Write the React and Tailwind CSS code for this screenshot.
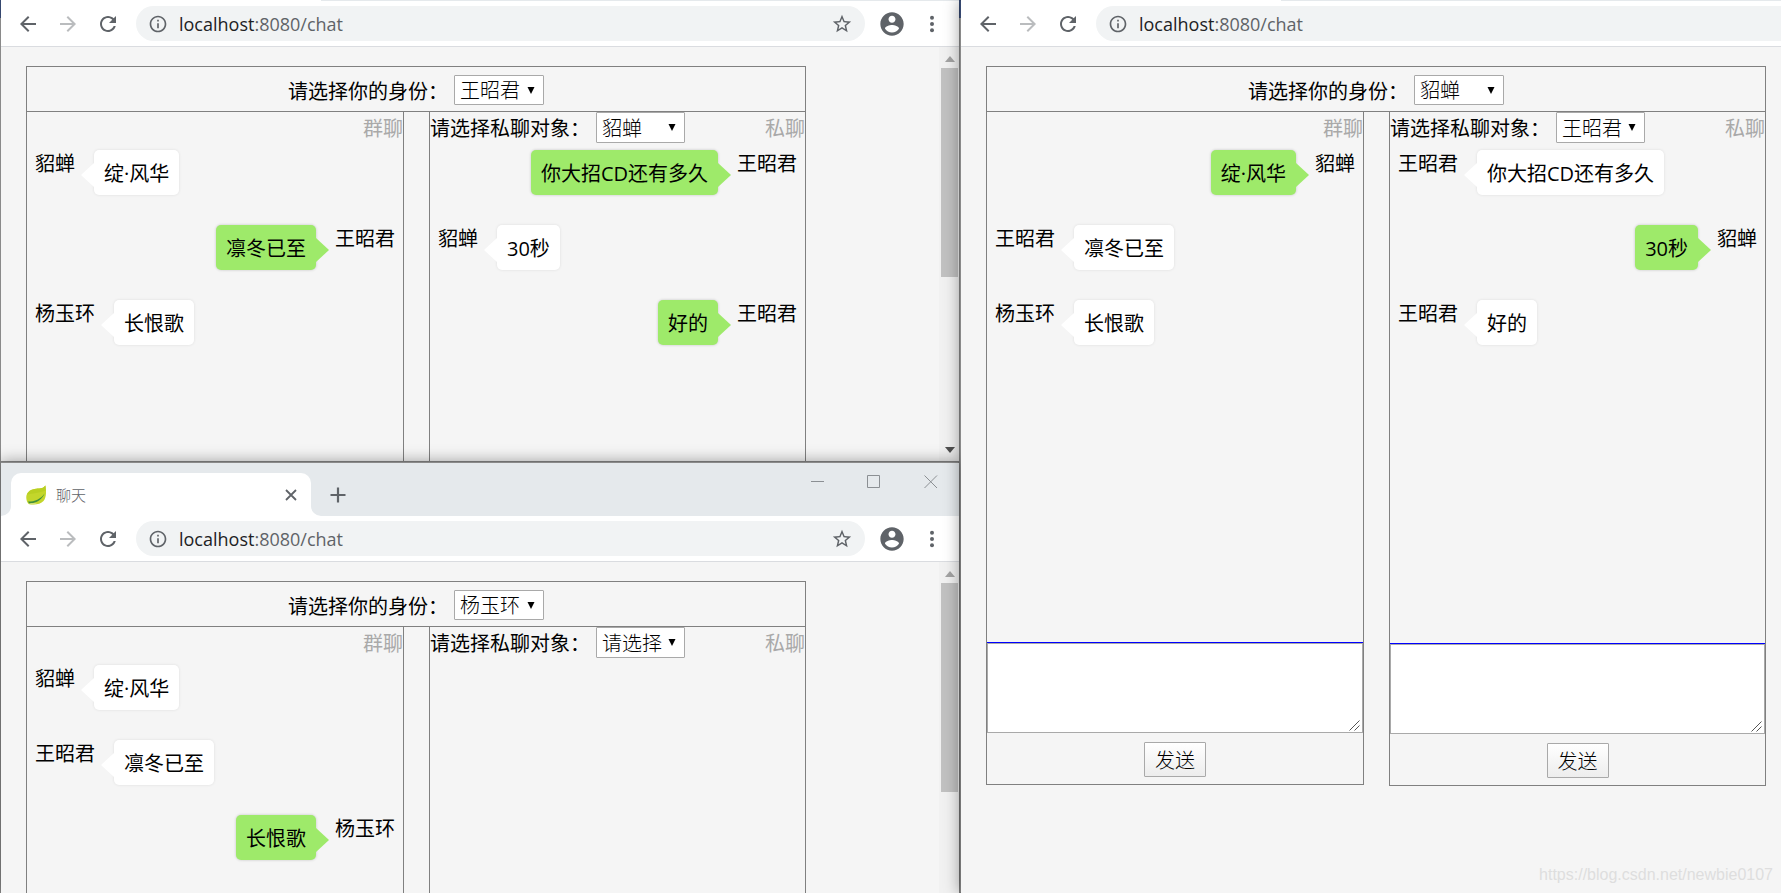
import React from "react";

const cx = (...parts) => parts.filter(Boolean).join(" ");

/* ---------- browser icons ---------- */

function IconBack({ className }) {
  return (
    <svg viewBox="0 0 24 24" className={cx("size-6", className)} fill="currentColor" aria-hidden="true">
      <path d="M20 11H7.83l5.59-5.59L12 4l-8 8 8 8 1.41-1.41L7.83 13H20v-2z" />
    </svg>
  );
}

function IconForward({ className }) {
  return (
    <svg viewBox="0 0 24 24" className={cx("size-6", className)} fill="currentColor" aria-hidden="true">
      <path d="M12 4l-1.41 1.41L16.17 11H4v2h12.17l-5.58 5.59L12 20l8-8z" />
    </svg>
  );
}

function IconReload() {
  return (
    <svg viewBox="0 0 24 24" className="size-6" fill="currentColor" aria-hidden="true">
      <path d="M17.65 6.35C16.2 4.9 14.21 4 12 4c-4.42 0-7.99 3.58-7.99 8s3.57 8 7.99 8c3.73 0 6.84-2.55 7.73-6h-2.08c-.82 2.33-3.04 4-5.65 4-3.31 0-6-2.69-6-6s2.69-6 6-6c1.66 0 3.14.69 4.22 1.78L13 11h7V4l-2.35 2.35z" />
    </svg>
  );
}

function IconInfo() {
  return (
    <svg viewBox="0 0 24 24" className="size-5" fill="currentColor" aria-hidden="true">
      <path d="M11 17h2v-6h-2v6zm1-15C6.48 2 2 6.48 2 12s4.48 10 10 10 10-4.48 10-10S17.52 2 12 2zm0 18c-4.41 0-8-3.59-8-8s3.59-8 8-8 8 3.59 8 8-3.59 8-8 8zM11 9h2V7h-2v2z" />
    </svg>
  );
}

function IconStar() {
  return (
    <svg viewBox="0 0 24 24" className="size-[22px]" fill="currentColor" aria-hidden="true">
      <path d="M22 9.24l-7.19-.62L12 2 9.19 8.63 2 9.24l5.46 4.73L5.82 21 12 17.27 18.18 21l-1.63-7.03L22 9.24zM12 15.4l-3.76 2.27 1-4.28-3.32-2.88 4.38-.38L12 6.1l1.71 4.04 4.38.38-3.32 2.88 1 4.28L12 15.4z" />
    </svg>
  );
}

function IconAccount() {
  return (
    <svg viewBox="0 0 24 24" className="size-7" fill="currentColor" aria-hidden="true">
      <path d="M12 2C6.48 2 2 6.48 2 12s4.48 10 10 10 10-4.48 10-10S17.52 2 12 2zm0 3c1.66 0 3 1.34 3 3s-1.34 3-3 3-3-1.34-3-3 1.34-3 3-3zm0 14.2c-2.5 0-4.71-1.28-6-3.22.03-1.99 4-3.08 6-3.08 1.99 0 5.97 1.09 6 3.08-1.29 1.94-3.5 3.22-6 3.22z" />
    </svg>
  );
}

function IconMenu() {
  return (
    <svg viewBox="0 0 24 24" className="size-6" fill="currentColor" aria-hidden="true">
      <circle cx="12" cy="5.8" r="2" />
      <circle cx="12" cy="12" r="2" />
      <circle cx="12" cy="18.2" r="2" />
    </svg>
  );
}

function LeafIcon() {
  return (
    <svg viewBox="0 0 20 20" className="size-5" aria-hidden="true">
      <path d="M19.4 0.6C17 4 13 3.4 8.5 4C3 4.8 0 8.5 0.3 13C0.4 15.5 1.3 17.5 2.6 19C8 20.2 14.5 19.5 17.5 16C20.5 12.5 20.4 6 19.4 0.6Z" fill="#c3d62b" />
      <path d="M19.4 0.6C17 4 13 3.4 8.5 4C4.5 4.6 2 6.7 1 9.5C6 8.5 14 8 19.8 5.5Z" fill="#b9cf22" />
      <path d="M2 16.6C8 16.8 14.5 14.5 18.6 8.5C16.5 14 10.5 18.6 3.2 18.4Z" fill="#3f8f3c" />
      <path d="M2.6 19C4 17.8 8 18.2 11 18.6C8.5 19.7 5 19.6 2.6 19Z" fill="#dbe68a" />
    </svg>
  );
}

/* ---------- browser chrome ---------- */

function IconButton({ label, className, children }) {
  return (
    <button type="button" aria-label={label} className={cx("flex size-6 shrink-0 items-center justify-center", className)}>
      {children}
    </button>
  );
}

function TabStrip() {
  return (
    <div className="flex h-[53px] shrink-0 bg-[#e5e9ec]">
      <div className="mt-[10px] flex w-[320px] items-end">
        <svg viewBox="0 0 10 10" className="size-[10px] shrink-0 text-white" fill="currentColor" aria-hidden="true">
          <path d="M10 0V10H0A10 10 0 0 0 10 0Z" />
        </svg>
        <div className="flex h-full flex-1 items-center rounded-t-[10px] bg-white pl-[15px] pr-[14px]">
          <LeafIcon />
          <span className="ml-[10px] flex-1 text-[15px] font-light leading-5 text-[#5f6368]">聊天</span>
          <button type="button" aria-label="关闭标签页" className="text-[#5f6368]">
            <svg viewBox="0 0 12 12" className="size-3" stroke="currentColor" strokeWidth="1.8" aria-hidden="true">
              <path d="M1 1L11 11M11 1L1 11" />
            </svg>
          </button>
        </div>
        <svg viewBox="0 0 10 10" className="size-[10px] shrink-0 text-white" fill="currentColor" aria-hidden="true">
          <path d="M0 0V10H10A10 10 0 0 1 0 0Z" />
        </svg>
      </div>
      <button type="button" aria-label="新标签页" className="ml-[9px] mt-[10px] flex items-center text-[#5f6368]">
        <svg viewBox="0 0 16 16" className="size-4" stroke="currentColor" strokeWidth="2.2" aria-hidden="true">
          <path d="M8 0.5V15.5M0.5 8H15.5" />
        </svg>
      </button>
      <div className="ml-auto mr-[21px] flex h-[38px] items-center gap-[43px] text-[#8b8f93]">
        <button type="button" aria-label="最小化">
          <svg viewBox="0 0 14 14" className="size-[14px]" stroke="currentColor" aria-hidden="true">
            <path d="M1 6.5H14" />
          </svg>
        </button>
        <button type="button" aria-label="最大化">
          <svg viewBox="0 0 14 14" className="size-[14px]" stroke="currentColor" fill="none" aria-hidden="true">
            <path d="M0.5 0.5H12.5V12.5H0.5Z" />
          </svg>
        </button>
        <button type="button" aria-label="关闭">
          <svg viewBox="0 0 14 14" className="size-[14px]" stroke="currentColor" aria-hidden="true">
            <path d="M0.5 0.5L13 13M13 0.5L0.5 13" />
          </svg>
        </button>
      </div>
    </div>
  );
}

/* Lower edge of a tab strip whose upper part lies above the screen */
function TabStripEdge() {
  return (
    <div className="flex h-px shrink-0 bg-[#e5e9ec]">
      <div className="w-[320px] bg-white" />
    </div>
  );
}

function Toolbar({ clipped }) {
  return (
    <div className="flex h-[46px] shrink-0 items-center border-b border-[#dadce0] bg-white pl-[15px] text-[#5f6368]">
      <IconButton label="后退">
        <IconBack />
      </IconButton>
      <IconButton label="前进" className="ml-4 text-[#babcbe]">
        <IconForward />
      </IconButton>
      <IconButton label="重新加载" className="ml-4">
        <IconReload />
      </IconButton>
      <div
        className={cx(
          "ml-4 flex h-[35px] flex-1 items-center bg-[#f1f3f4] pl-3",
          clipped ? "rounded-l-full" : "rounded-full pr-[11px]"
        )}
      >
        <IconInfo />
        <a href="#chat" className="ml-[11px] flex-1 font-['Open_Sans','Noto_Sans',sans-serif] text-[18px] font-normal leading-6">
          <span className="text-[#202124]">localhost</span>:8080/chat
        </a>
        {!clipped && (
          <IconButton label="收藏">
            <IconStar />
          </IconButton>
        )}
      </div>
      {!clipped && (
        <>
          <IconButton label="用户" className="ml-[15px]">
            <span className="shrink-0">
              <IconAccount />
            </span>
          </IconButton>
          <IconButton label="菜单" className="ml-4 mr-[15px]">
            <IconMenu />
          </IconButton>
        </>
      )}
    </div>
  );
}

function ScrollBar({ withDown }) {
  return (
    <div className="flex w-5 shrink-0 flex-col items-center bg-[#f1f1f1] py-2 pl-px" aria-hidden="true">
      <svg viewBox="0 0 10 6" className="mt-px h-[6px] w-[10px] shrink-0" fill="#a3a3a3">
        <path d="M0 6L5 0L10 6Z" />
      </svg>
      <div className="mt-[6px] h-[209px] w-[17px] shrink-0 bg-[#c1c1c1]" />
      {withDown && (
        <svg viewBox="0 0 10 6" className="mt-auto h-[6px] w-[10px] shrink-0" fill="#505050">
          <path d="M0 0L5 6L10 0Z" />
        </svg>
      )}
    </div>
  );
}

/* ---------- chat page ---------- */

function Select({ id, value, options, className }) {
  return (
    <span className={cx("relative inline-flex", className)}>
      <select
        id={id}
        defaultValue={value}
        className="w-full appearance-none rounded-[1px] border border-[#a9a9a9] bg-white pl-[5px] pt-[2px] font-['Open_Sans','Noto_Sans_CJK_SC',sans-serif] text-[20px] font-light leading-6 text-black"
      >
        {options.map((o) => (
          <option key={o}>{o}</option>
        ))}
      </select>
      <svg viewBox="0 0 8 7" className="pointer-events-none absolute right-[9px] top-3 h-[7px] w-2" fill="#000" aria-hidden="true">
        <path d="M0.5 0H7.5L4 7Z" />
      </svg>
    </span>
  );
}

function Message({ from, text, mine }) {
  return (
    <li className={cx("mb-[30px] flex h-[45px] items-start px-2", mine && "flex-row-reverse")}>
      <span>{from}</span>
      <div
        className={cx(
          "relative rounded-[5px] px-[10px] pb-2 pt-[10px]",
          mine
            ? "mr-[19px] bg-[#9eea6a] shadow-[0_0_3px_rgba(0,0,0,0.2)]"
            : "ml-[19px] bg-white shadow-[0_0_3px_rgba(0,0,0,0.1)]"
        )}
      >
        {text}
        <svg
          viewBox="0 0 14 24"
          className={cx(
            "absolute top-[13px] h-6 w-[14px]",
            mine ? "left-full -ml-px text-[#9eea6a]" : "right-full -mr-px text-white"
          )}
          fill="currentColor"
          aria-hidden="true"
        >
          {mine ? <path d="M0 0H1L14 12L1 24H0Z" /> : <path d="M14 0H13L0 12L13 24H14Z" />}
        </svg>
      </div>
    </li>
  );
}

function Composer({ name }) {
  return (
    <form onSubmit={(e) => e.preventDefault()}>
      <div className="relative">
        <textarea
          aria-label={name}
          className="block h-[90px] w-full resize border border-[#a9a9a9] bg-white p-[2px] [&::-webkit-resizer]:bg-transparent"
        />
        <svg
          viewBox="0 0 11 11"
          className="pointer-events-none absolute bottom-[2px] right-[3px] size-[11px]"
          stroke="#555"
          aria-hidden="true"
        >
          <path d="M10.5 0.5L0.5 10.5M10.5 5.5L5.5 10.5" />
        </svg>
      </div>
      <div className="flex h-[51px] items-center justify-center pt-[2px]">
        <button
          type="submit"
          className="h-[35px] rounded-[1px] border border-[#a9a9a9] bg-linear-to-b from-white to-[#ededed] px-[10px] pt-[2px] font-['Open_Sans','Noto_Sans_CJK_SC',sans-serif] text-[20px] font-light text-black"
        >
          发送
        </button>
      </div>
    </form>
  );
}

function Panel({ name, messages, head, logHeight, composer, className }) {
  return (
    <section className={cx("border border-t-0 border-[#808080]", className)}>
      <div className="flex h-[30px] items-start">
        {head}
        <span className="ml-auto mt-[3px] text-[#a9a9a9]">{name}</span>
      </div>
      <ul className={cx("border-b border-[#0000ff] pt-2", logHeight)}>
        {messages.map((m) => (
          <Message key={m.text} {...m} />
        ))}
      </ul>
      {composer && <Composer name={name} />}
    </section>
  );
}

const PEOPLE = ["王昭君", "貂蝉", "杨玉环"];

function ChatPage({ id, me, peer, group, direct, composer }) {
  return (
    <main className="ml-[25px] mt-[19px] w-[780px] text-[20px] leading-[27px] text-black">
      <div className="flex h-[46px] items-center justify-center border border-[#808080] pt-[2px]">
        <label htmlFor={`${id}-me`} className="mr-[6px] pt-[2px]">
          请选择你的身份：
        </label>
        <Select id={`${id}-me`} value={me} options={PEOPLE} className="h-[30px] w-[90px]" />
      </div>
      <div className="flex items-start justify-between">
        <Panel name="群聊" messages={group} logHeight="h-[501px]" composer={composer} className="w-[378px]" />
        <Panel
          name="私聊"
          messages={direct}
          logHeight="h-[502px]"
          composer={composer}
          className="w-[377px]"
          head={
            <>
              <label htmlFor={`${id}-peer`} className="mr-[6px] mt-[3px]">
                请选择私聊对象：
              </label>
              <Select id={`${id}-peer`} value={peer} options={["请选择", ...PEOPLE]} className="h-[31px] w-[89px]" />
            </>
          }
        />
      </div>
    </main>
  );
}

function BrowserWindow({ strip, clipped, withDown, className, children }) {
  return (
    <section
      className={cx(
        "flex min-h-0 min-w-0 flex-col overflow-hidden border-l border-transparent bg-[#f5f5f5] bg-clip-padding",
        className
      )}
    >
      {strip}
      <Toolbar clipped={clipped} />
      <div className="flex min-h-0 flex-1">
        <div className="min-w-0 flex-1 overflow-hidden">{children}</div>
        {!clipped && <ScrollBar withDown={withDown} />}
      </div>
    </section>
  );
}

/* ---------- data ---------- */

const DIAO = "貂蝉";
const WANG = "王昭君";
const YANG = "杨玉环";

const groupFor = (me) =>
  [
    { from: DIAO, text: "绽·风华" },
    { from: WANG, text: "凛冬已至" },
    { from: YANG, text: "长恨歌" },
  ].map((m) => ({ ...m, mine: m.from === me }));

const directFor = (me) =>
  [
    { from: WANG, text: "你大招CD还有多久" },
    { from: DIAO, text: "30秒" },
    { from: WANG, text: "好的" },
  ].map((m) => ({ ...m, mine: m.from === me }));

export default function App() {
  return (
    <div className="flex h-screen overflow-hidden bg-[linear-gradient(to_bottom,#35476f_18px,#8a8a8a_18px)] font-['Open_Sans','Noto_Sans_CJK_SC',sans-serif] font-normal">
      <div className="flex min-w-0 flex-[959] flex-col">
        <BrowserWindow className="flex-[461]" strip={<TabStripEdge />} withDown>
          <ChatPage id="w1" me={WANG} peer={DIAO} group={groupFor(WANG)} direct={directFor(WANG)} />
        </BrowserWindow>
        <BrowserWindow
          className="relative flex-[430] border-t-2 shadow-[0_0_14px_rgba(0,0,0,0.35)]"
          strip={<TabStrip />}
        >
          <ChatPage id="w2" me={YANG} peer="请选择" group={groupFor(YANG)} direct={[]} />
        </BrowserWindow>
      </div>
      <BrowserWindow
        className="relative flex-[820] border-l-2 shadow-[0_0_14px_rgba(0,0,0,0.35)]"
        strip={<TabStripEdge />}
        clipped
      >
        <ChatPage id="w3" me={DIAO} peer={WANG} group={groupFor(DIAO)} direct={directFor(DIAO)} composer />
        <p className="absolute bottom-2 right-2 font-['Liberation_Sans',sans-serif] text-[16px] font-normal leading-5 text-[#dedede]">
          https://blog.csdn.net/newbie0107
        </p>
      </BrowserWindow>
    </div>
  );
}
